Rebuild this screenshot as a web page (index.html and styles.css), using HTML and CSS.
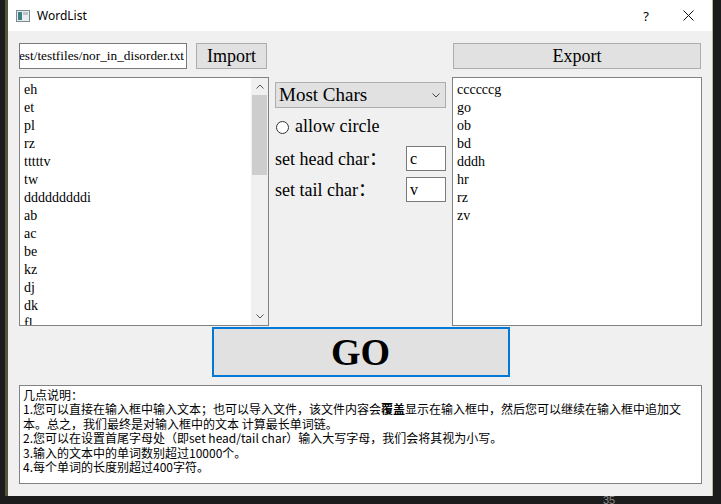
FILE: index.html
```html
<!DOCTYPE html>
<html>
  <head>
    <title>WordList</title>
    <link rel="stylesheet" href="styles.css">
  </head>
  <body>
    <div class="window">
      <div class="titlebar">
        <svg class="app-icon" width="14" height="12" viewBox="0 0 14 12">
          <rect x="0.5" y="0.5" width="13" height="11" fill="#e8eef0" stroke="#7d8a90"/>
          <rect x="2" y="2" width="4" height="8" fill="#3f7f86"/>
          <rect x="7" y="2" width="5" height="3" fill="#b9c6cb"/>
        </svg>
        <span class="title">WordList</span>
        <span class="help">?</span>
        <svg class="close" width="11" height="11" viewBox="0 0 11 11">
          <path d="M0.5 0.5 L10.5 10.5 M10.5 0.5 L0.5 10.5" stroke="#111" stroke-width="1"/>
        </svg>
      </div>

      <div class="client">
        <div class="grid">
          <div class="file-row">
            <div class="path"><span>../test/testfiles/nor_in_disorder.txt</span></div>
            <button class="btn import">Import</button>
          </div>
          <div></div>
          <button class="btn export">Export</button>

          <div class="textbox">
            <div class="lines">
              <div>eh</div><div>et</div><div>pl</div><div>rz</div><div>tttttv</div>
              <div>tw</div><div>dddddddddi</div><div>ab</div><div>ac</div><div>be</div>
              <div>kz</div><div>dj</div><div>dk</div><div>fl</div>
            </div>
            <div class="scrollbar">
              <div class="arrow">
                <svg width="8" height="5" viewBox="0 0 8 5"><path d="M0.5 4.5 L4 1 L7.5 4.5" fill="none" stroke="#555"/></svg>
              </div>
              <div class="thumb"></div>
              <div class="track"></div>
              <div class="arrow">
                <svg width="8" height="5" viewBox="0 0 8 5"><path d="M0.5 0.5 L4 4 L7.5 0.5" fill="none" stroke="#555"/></svg>
              </div>
            </div>
          </div>

          <div class="options">
            <div class="combo">
              <span>Most Chars</span>
              <svg width="8" height="5" viewBox="0 0 8 5"><path d="M0.5 0.5 L4 4 L7.5 0.5" fill="none" stroke="#444"/></svg>
            </div>
            <label class="radio-row"><span class="radio"></span>allow circle</label>
            <div class="char-row head">
              <span>set head char：</span>
              <div class="char-input">c</div>
            </div>
            <div class="char-row tail">
              <span>set tail char：</span>
              <div class="char-input">v</div>
            </div>
          </div>

          <div class="textbox">
            <div class="lines">
              <div>ccccccg</div><div>go</div><div>ob</div><div>bd</div>
              <div>dddh</div><div>hr</div><div>rz</div><div>zv</div>
            </div>
          </div>
        </div>

        <button class="go">GO</button>

        <div class="notes">
          <div>几点说明：</div>
          <div>1.您可以直接在输入框中输入文本；也可以导入文件，该文件内容会<b>覆盖</b>显示在输入框中，然后您可以继续在输入框中追加文本。总之，我们最终是对输入框中的文本 计算最长单词链。</div>
          <div>2.您可以在设置首尾字母处（即set head/tail char）输入大写字母，我们会将其视为小写。</div>
          <div>3.输入的文本中的单词数别超过10000个。</div>
          <div>4.每个单词的长度别超过400字符。</div>
        </div>
      </div>
    </div>
    <div class="lineno">35</div>
  </body>
</html>
```
FILE: styles.css
```css
/* desktop behind the window */
body {
  margin: 0;
  background: #1c1c1c;
  font-family: "Liberation Serif", "Noto Sans CJK SC", serif;
  color: #000;
}

.window {
  margin-left: 5px;
  border-left: 3px solid #56553b;
  border-right: 1px solid #bdb59a;
  width: 704px;
  height: 496px;
  background: #f0f0f0;
  display: flex;
  flex-direction: column;
}

/* title bar */
.titlebar {
  height: 31px;
  background: #fff;
  display: flex;
  align-items: center;
  padding: 0 18px 0 8px;
  font-family: "Noto Sans", sans-serif;
  font-size: 12px;
}
.app-icon {
  margin-right: 7px;
}
.help {
  margin-left: auto;
  margin-right: 34px;
  font-size: 13px;
}

/* client area */
.client {
  padding: 12px 10px 0 11px;
  display: flex;
  flex-direction: column;
}

.grid {
  display: grid;
  grid-template-columns: 250px 171px 250px;
  grid-template-rows: 26px 249px;
  column-gap: 6px;
  row-gap: 8px;
}

.file-row {
  display: flex;
  gap: 9px;
}
.path {
  width: 168px;
  box-sizing: border-box;
  border: 1px solid #7a7a7a;
  background: #fff;
  display: flex;
  justify-content: flex-end;
  align-items: center;
  overflow: hidden;
  white-space: nowrap;
  font-size: 13.3px;
  padding-right: 2px;
}

.btn {
  font-family: "Liberation Serif", serif;
  font-size: 18px;
  background: #e1e1e1;
  border: 1px solid #adadad;
  padding: 0;
  color: #000;
}
.import {
  width: 71px;
}
.export {
  margin-left: 1px;
  width: 248px;
}

.textbox {
  border: 1px solid #828282;
  background: #fff;
  display: flex;
  overflow: hidden;
}
.lines {
  flex: 1;
  padding: 3px 4px;
  font-size: 14px;
  line-height: 18px;
  overflow: hidden;
}

.scrollbar {
  width: 17px;
  background: #f0f0f0;
  display: flex;
  flex-direction: column;
}
.arrow {
  height: 17px;
  display: flex;
  align-items: center;
  justify-content: center;
}
.thumb {
  height: 80px;
  margin: 0 1px;
  background: #cdcdcd;
}
.track {
  flex: 1;
}

/* middle column */
.options {
  display: flex;
  flex-direction: column;
  font-size: 18px;
}
.combo {
  margin-top: 5px;
  height: 26px;
  box-sizing: border-box;
  background: #e1e1e1;
  border: 1px solid #adadad;
  display: flex;
  align-items: center;
  justify-content: space-between;
  padding: 0 5px 0 3px;
  font-size: 19px;
}
.radio-row {
  margin-top: 8px;
  height: 20px;
  line-height: 20px;
  display: flex;
  align-items: center;
}
.radio {
  width: 11px;
  height: 11px;
  border: 1px solid #333;
  border-radius: 50%;
  background: #fff;
  margin: 2px 6px 0 1px;
}
.char-row {
  height: 25px;
  display: flex;
  align-items: center;
  justify-content: space-between;
  line-height: 20px;
}
.head {
  margin-top: 10px;
}
.tail {
  margin-top: 6px;
}
.char-input {
  width: 40px;
  height: 25px;
  box-sizing: border-box;
  border: 1px solid #7a7a7a;
  background: #fff;
  font-size: 16px;
  line-height: 23px;
  padding-left: 3px;
}

.go {
  margin: 1px auto 0;
  width: 298px;
  height: 50px;
  background: #e1e1e1;
  border: 2px solid #0078d7;
  font-family: "Liberation Serif", serif;
  font-weight: bold;
  font-size: 38px;
  color: #000;
  padding: 0;
}

.notes {
  margin-top: 8px;
  height: 99px;
  box-sizing: border-box;
  border: 1px solid #828282;
  background: #fff;
  padding: 2px 3px;
  font-family: "Noto Sans CJK SC", sans-serif;
  font-size: 12px;
  line-height: 14.4px;
}

.lineno {
  margin-left: 603px;
  font-family: "Liberation Sans", sans-serif;
  font-size: 11px;
  line-height: 8px;
  color: #8a8a8a;
}
```
